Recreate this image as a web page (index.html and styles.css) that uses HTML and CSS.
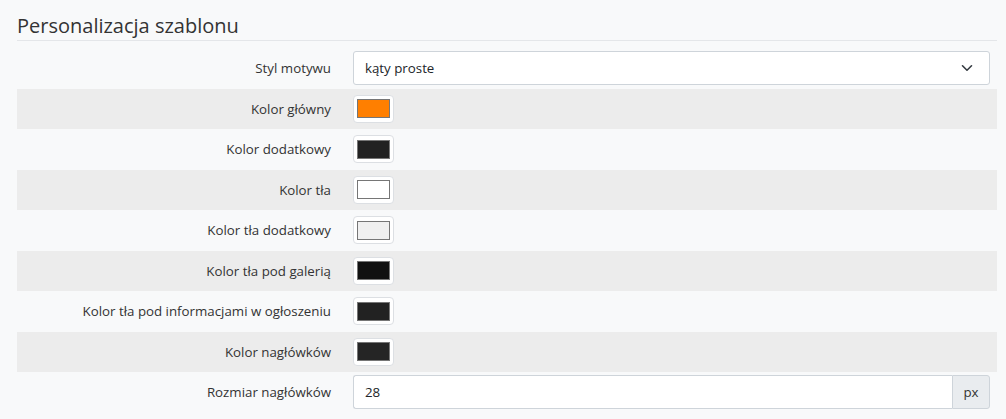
FILE: index.html
```html
<!DOCTYPE html>
<html lang="pl">
<head>
<meta charset="utf-8">
<link rel="stylesheet" href="styles.css">
</head>
<body>
<div class="wrap">
  <h2 class="title">Personalizacja szablonu</h2>
  <div class="rows">
    <div class="row">
      <div class="label">Styl motywu</div>
      <div class="ctrl">
        <div class="select"><span>kąty proste</span>
          <svg width="12" height="8" viewBox="0 0 12 8"><path d="M1.5 1.8 L6 6.2 L10.5 1.8" fill="none" stroke="#343a40" stroke-width="1.6" stroke-linecap="round" stroke-linejoin="round"/></svg>
        </div>
      </div>
    </div>
    <div class="row"><div class="label">Kolor główny</div><div class="ctrl"><div class="swatch"><i style="background:#ff7f00"></i></div></div></div>
    <div class="row"><div class="label">Kolor dodatkowy</div><div class="ctrl"><div class="swatch"><i style="background:#222222"></i></div></div></div>
    <div class="row"><div class="label">Kolor tła</div><div class="ctrl"><div class="swatch"><i style="background:#ffffff"></i></div></div></div>
    <div class="row"><div class="label">Kolor tła dodatkowy</div><div class="ctrl"><div class="swatch"><i style="background:#f0f0f0"></i></div></div></div>
    <div class="row"><div class="label">Kolor tła pod galerią</div><div class="ctrl"><div class="swatch"><i style="background:#111111"></i></div></div></div>
    <div class="row"><div class="label">Kolor tła pod informacjami w ogłoszeniu</div><div class="ctrl"><div class="swatch"><i style="background:#222222"></i></div></div></div>
    <div class="row"><div class="label">Kolor nagłówków</div><div class="ctrl"><div class="swatch"><i style="background:#252525"></i></div></div></div>
    <div class="row">
      <div class="label">Rozmiar nagłówków</div>
      <div class="ctrl">
        <div class="group"><div class="input">28</div><div class="addon">px</div></div>
      </div>
    </div>
  </div>
</div>
</body>
</html>
```

FILE: styles.css
```css
html, body {
  margin: 0;
  padding: 0;
  background: #f8f9fa;
  font-family: "Open Sans", "Noto Sans", sans-serif;
  color: #212529;
}
.wrap {
  width: 980px;
  padding: 12px 0 0 17px;
}
.title {
  margin: 0 0 7px 0;
  font-size: 20px;
  font-weight: 400;
  line-height: 28px;
  color: #333;
  border-bottom: 1px solid #e4e6e9;
  padding-bottom: 0;
}
.rows {
  display: flex;
  flex-direction: column;
}
.row {
  display: grid;
  grid-template-columns: 314px 637px;
  column-gap: 22px;
  align-items: center;
  padding: 3px 0;
  height: 34.5px;
}
.row:nth-child(even) {
  background: #ececec;
}
.label {
  text-align: right;
  font-size: 13.3px;
  color: #333;
}
.ctrl {
  display: flex;
  align-items: center;
}
.select {
  flex: 1;
  height: 32px;
  background: #fff;
  border: 1px solid #ced4da;
  border-radius: 3px;
  display: flex;
  align-items: center;
  justify-content: space-between;
  padding: 0 16px 0 11px;
  font-size: 13.3px;
  color: #212529;
}
.swatch {
  box-sizing: border-box;
  width: 41px;
  height: 28px;
  background: #fff;
  border: 1px solid #dcdfe3;
  border-radius: 4px;
  display: flex;
  align-items: center;
  justify-content: center;
}
.swatch i {
  display: block;
  box-sizing: border-box;
  width: 33px;
  height: 19px;
  border: 1px solid #767676;
}
.group {
  flex: 1;
  display: flex;
  height: 34px;
}
.input {
  flex: 1;
  background: #fff;
  border: 1px solid #ced4da;
  border-right: none;
  border-radius: 3px 0 0 3px;
  display: flex;
  align-items: center;
  padding: 0 11px;
  font-size: 13.3px;
}
.addon {
  width: 36px;
  background: #e9ecef;
  border: 1px solid #ced4da;
  border-radius: 0 3px 3px 0;
  display: flex;
  align-items: center;
  justify-content: center;
  font-size: 13.3px;
  color: #333;
}
```
